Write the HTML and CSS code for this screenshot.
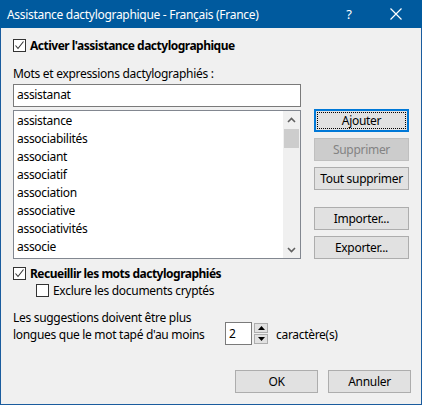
FILE: index.html
```html
<!DOCTYPE html>
<html lang="fr">
<head>
<meta charset="utf-8">
<title>Assistance dactylographique</title>
<link rel="stylesheet" href="styles.css">
</head>
<body>
<div class="window">
  <div class="titlebar">
    <span class="title">Assistance dactylographique - Français (France)</span>
    <span class="tb-help">?</span>
    <span class="tb-close"><svg width="12" height="12" viewBox="0 0 12 12"><path d="M0.5 0.5 L11.5 11.5 M11.5 0.5 L0.5 11.5" stroke="#fff" stroke-width="1.2" fill="none"/></svg></span>
  </div>
  <div class="content">
    <label class="check bold row-activate">
      <span class="box"><svg width="11" height="11" viewBox="0 0 11 11"><path d="M1.5 5.5 L4 8.5 L9.5 1.5" stroke="#333" stroke-width="1.1" fill="none"/></svg></span>
      <span>Activer l'assistance dactylographique</span>
    </label>

    <div class="main-row">
      <div class="left-col">
        <div class="label">Mots et expressions dactylographiés :</div>
        <div class="textbox">assistanat</div>
        <div class="listbox">
          <ul class="items">
            <li>assistance</li>
            <li>associabilités</li>
            <li>associant</li>
            <li>associatif</li>
            <li>association</li>
            <li>associative</li>
            <li>associativités</li>
            <li>associe</li>
          </ul>
          <div class="scrollbar">
            <div class="arrow"><svg width="9" height="6" viewBox="0 0 9 6"><path d="M1 5 L4.5 1.5 L8 5" stroke="#606060" stroke-width="1.6" fill="none"/></svg></div>
            <div class="track"><div class="thumb"></div></div>
            <div class="arrow"><svg width="9" height="6" viewBox="0 0 9 6"><path d="M1 1 L4.5 4.5 L8 1" stroke="#606060" stroke-width="1.6" fill="none"/></svg></div>
          </div>
        </div>
      </div>
      <div class="right-col">
        <div class="btn default"><span class="focus">Ajouter</span></div>
        <div class="btn disabled">Supprimer</div>
        <div class="btn">Tout supprimer</div>
        <div class="btn spaced">Importer...</div>
        <div class="btn">Exporter...</div>
      </div>
    </div>

    <label class="check bold row-collect">
      <span class="box"><svg width="11" height="11" viewBox="0 0 11 11"><path d="M1.5 5.5 L4 8.5 L9.5 1.5" stroke="#333" stroke-width="1.1" fill="none"/></svg></span>
      <span>Recueillir les mots dactylographiés</span>
    </label>
    <label class="check row-exclude">
      <span class="box"></span>
      <span>Exclure les documents cryptés</span>
    </label>

    <div class="suggest-row">
      <div class="suggest-text">Les suggestions doivent être plus<br>longues que le mot tapé d'au moins</div>
      <div class="spin">
        <div class="spin-input">2</div>
        <div class="spin-btns">
          <div class="spin-btn"><svg width="7" height="4" viewBox="0 0 7 4"><path d="M0 4 L3.5 0 L7 4 Z" fill="#000"/></svg></div>
          <div class="spin-btn"><svg width="7" height="4" viewBox="0 0 7 4"><path d="M0 0 L3.5 4 L7 0 Z" fill="#000"/></svg></div>
        </div>
      </div>
      <div class="suffix">caractère(s)</div>
    </div>

    <div class="footer">
      <div class="btn ok">OK</div>
      <div class="btn cancel">Annuler</div>
    </div>
  </div>
</div>
</body>
</html>
```

FILE: styles.css
```css
* { box-sizing: border-box; }
html, body { margin: 0; padding: 0; background: #f0f0f0; }
body {
  font-family: "Noto Sans", "DejaVu Sans", sans-serif;
  font-size: 12px;
  letter-spacing: -0.3px;
  color: #000;
}
.window {
  width: 422px;
  height: 405px;
  background: #f0f0f0;
  border: 1px solid #1a5c9e;
  border-top: none;
  display: flex;
  flex-direction: column;
}
.titlebar {
  height: 28px;
  margin: 0 -1px;
  background: #005a9e;
  color: #fff;
  display: flex;
  align-items: center;
  padding-left: 7px;
  font-size: 12px;
}
.title { flex: 1; }
.tb-help { width: 46px; text-align: center; font-size: 13px; margin-right: 1px; }
.tb-close { width: 46px; display: flex; justify-content: center; align-items: center; margin-right: 3px; }

.content { padding: 0 12px; display: flex; flex-direction: column; }

.check { display: flex; align-items: center; gap: 4px; height: 16px; }
.bold { font-weight: bold; letter-spacing: -0.5px; }
.box {
  width: 13px; height: 13px;
  border: 1px solid #333;
  background: #fff;
  display: flex; align-items: center; justify-content: center;
}
.row-activate { margin-top: 9px; }

.main-row { display: flex; gap: 13px; margin-top: 12px; }
.left-col { width: 288px; display: flex; flex-direction: column; }
.label { height: 17px; line-height: 17px; }
.textbox {
  margin-top: 2px;
  height: 23px;
  border: 1px solid #7a7a7a;
  background: #fff;
  padding-left: 3px;
  line-height: 20px;
}
.listbox {
  margin-top: 3px;
  height: 149px;
  border: 1px solid #828790;
  background: #fff;
  display: flex;
}
.items { list-style: none; margin: 0; padding: 1px 0 0 3px; flex: 1; }
.items li { height: 18px; line-height: 18px; }
.scrollbar { width: 17px; background: #f0f0f0; display: flex; flex-direction: column; }
.arrow { height: 17px; display: flex; align-items: center; justify-content: center; }
.track { flex: 1; padding: 0 1px; }
.thumb { height: 19px; background: #cdcdcd; margin-top: 1px; }

.right-col { display: flex; flex-direction: column; padding-top: 44px; gap: 6px; }
.btn {
  width: 95px; height: 23px;
  background: #e1e1e1;
  border: 1px solid #adadad;
  display: flex; align-items: center; justify-content: center;
}
.btn.default { border: 2px solid #0078d7; padding: 1px; }
.btn.default .focus {
  width: 100%; height: 100%;
  border: 1px dotted #000;
  display: flex; align-items: center; justify-content: center;
}
.btn.disabled { background: #cccccc; border-color: #bfbfbf; color: #838383; }
.btn.spaced { margin-top: 11px; }

.row-collect { margin-top: 6px; }
.row-exclude { margin-top: 1px; margin-left: 23px; }

.suggest-row { display: flex; align-items: flex-end; margin-top: 11px; }
.suggest-text { width: 212px; line-height: 17px; }
.spin { display: flex; gap: 2px; align-items: center; margin-bottom: -2px; }
.spin-input {
  width: 27px; height: 23px;
  border: 1px solid #7a7a7a;
  background: #fff;
  padding-left: 3px;
  line-height: 21px;
}
.spin-btns { display: flex; flex-direction: column; gap: 1px; }
.spin-btn {
  width: 14px; height: 10px;
  border: 1px solid #adadad;
  background: #e1e1e1;
  display: flex; align-items: center; justify-content: center;
}
.suffix { margin-left: 8px; line-height: 17px; }

.footer { display: flex; justify-content: flex-end; gap: 10px; margin-top: 27px; margin-right: -2px; }
.footer .btn { width: 83px; }
```
